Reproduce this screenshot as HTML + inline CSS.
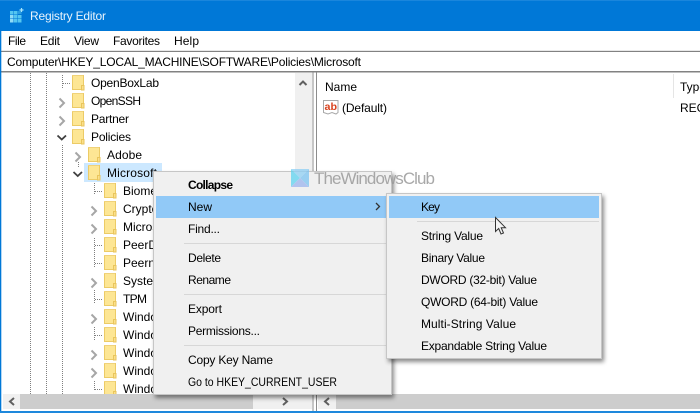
<!DOCTYPE html>
<html><head><meta charset="utf-8"><title>Registry Editor</title>
<style>
html,body{margin:0;padding:0;background:#fff;width:700px;height:413px;overflow:hidden}
svg{display:block}
text{font-family:"Liberation Sans",sans-serif;font-size:12px;fill:#000}
</style></head><body>
<svg width="700" height="413" viewBox="0 0 700 413" xmlns="http://www.w3.org/2000/svg">
<defs>
<g id="f"><rect x="0.5" y="0.5" width="11" height="14" fill="#fde694" stroke="#eccb66"/><rect x="0" y="0" width="11" height="1" fill="#f0d27a"/><rect x="9.5" y="10.5" width="2.5" height="4.5" fill="#fbe08a" stroke="#e9c55c" stroke-width="1"/></g>
<path id="c" d="M0 0l4.500 4.500l-4.500 4.500" fill="none" stroke="#a6a6a6" stroke-width="2"/>
<path id="e" d="M0 0l4.250 4l4.250-4" fill="none" stroke="#404040" stroke-width="1.800"/>
<filter id="s" x="-5%" y="-5%" width="112%" height="112%"><feDropShadow dx="2" dy="3" stdDeviation="2" flood-color="#000" flood-opacity=".45"/></filter>
</defs>

<!-- title bar -->
<rect x="0" y="0" width="700" height="31" fill="#0078d7"/>
<rect x="0" y="0" width="700" height="1" fill="#1a86dc"/>
<g fill="#55c6f0">
<rect x="10" y="11" width="3.500" height="3.500"/><rect x="14" y="11" width="3.500" height="3.500"/>
<rect x="10" y="15" width="3.500" height="3.500" fill="#8fdcf7"/><rect x="14" y="15" width="3.500" height="3.500"/><rect x="18" y="15" width="3.500" height="3.500"/>
<rect x="10" y="19" width="3.500" height="3.500" fill="#8fdcf7"/><rect x="14" y="19" width="3.500" height="3.500"/><rect x="18" y="19" width="3.500" height="3.500"/>
<rect x="18" y="11" width="3.500" height="3" fill="#2a9ce0"/>
<path d="M21.500 8v4M19.500 10h4" stroke="#a5e4fa" stroke-width="1.200"/>
</g>
<text x="30" y="20" textLength="76" lengthAdjust="spacing" style="fill:#e8f3fc">Registry Editor</text>

<!-- menu -->
<text x="8" y="45" textLength="18" lengthAdjust="spacing">File</text>
<text x="40" y="45" textLength="20" lengthAdjust="spacing">Edit</text>
<text x="74" y="45" textLength="25" lengthAdjust="spacing">View</text>
<text x="113" y="45" textLength="47" lengthAdjust="spacing">Favorites</text>
<text x="174" y="45" textLength="25" lengthAdjust="spacing">Help</text>

<!-- address -->
<rect x="0" y="50" width="700" height="1" fill="#e8e8e8"/>
<rect x="1" y="51" width="699" height="1" fill="#828282"/>
<text x="7" y="66" textLength="354" lengthAdjust="spacing">Computer\HKEY_LOCAL_MACHINE\SOFTWARE\Policies\Microsoft</text>
<rect x="1" y="71" width="699" height="1.500" fill="#828282"/>

<!-- left edge -->
<rect x="0" y="31" width="1.300" height="382" fill="#0078d7"/>

<!-- tree guide lines -->
<g stroke="#7f7f7f" stroke-width="1" stroke-dasharray="1 1" fill="none">
<path d="M30.500 73V394M46.500 73V394M62.500 75V88M62.500 145V394M78.500 162V167"/>
<path d="M94.500 183V194M94.500 238V268M94.500 290V304M94.500 327V340M94.500 381V391"/>
<path d="M63 83.500h7M95 191.500h7M95 245.500h7M95 263.500h7M95 299.500h7M95 335.500h7M95 389.500h7"/>
</g>

<!-- tree selection -->
<rect x="84" y="163" width="78" height="19" fill="#cce8ff"/>

<!-- folders -->
<use href="#f" x="72" y="75"/><use href="#f" x="72" y="93"/><use href="#f" x="72" y="111"/><use href="#f" x="72" y="129"/>
<use href="#f" x="88" y="147"/><use href="#f" x="88" y="165"/>
<use href="#f" x="104" y="183"/><use href="#f" x="104" y="201"/><use href="#f" x="104" y="219"/><use href="#f" x="104" y="237"/><use href="#f" x="104" y="255"/><use href="#f" x="104" y="273"/><use href="#f" x="104" y="291"/><use href="#f" x="104" y="309"/><use href="#f" x="104" y="327"/><use href="#f" x="104" y="345"/><use href="#f" x="104" y="363"/><use href="#f" x="104" y="381"/>

<!-- chevrons -->
<use href="#c" x="59.500" y="98.500"/><use href="#c" x="59.500" y="116.500"/>
<use href="#e" x="57.500" y="135.500"/>
<use href="#c" x="75.500" y="152.500"/>
<use href="#e" x="73.500" y="172"/>
<use href="#c" x="91.500" y="206.500"/><use href="#c" x="91.500" y="224.500"/><use href="#c" x="91.500" y="278.500"/><use href="#c" x="91.500" y="314.500"/><use href="#c" x="91.500" y="350.500"/><use href="#c" x="91.500" y="368.500"/>

<!-- tree text -->
<text x="91" y="87" textLength="68" lengthAdjust="spacing">OpenBoxLab</text>
<text x="91" y="105" textLength="50" lengthAdjust="spacing">OpenSSH</text>
<text x="91" y="123" textLength="38" lengthAdjust="spacing">Partner</text>
<text x="91" y="141" textLength="40" lengthAdjust="spacing">Policies</text>
<text x="107" y="159" textLength="35" lengthAdjust="spacing">Adobe</text>
<text x="107" y="177" textLength="50" lengthAdjust="spacing">Microsoft</text>
<text x="123" y="195">Biometrics</text>
<text x="123" y="213">Cryptography</text>
<text x="123" y="231">Microsoft</text>
<text x="123" y="249">PeerDist</text>
<text x="123" y="267">Peernet</text>
<text x="123" y="285">SystemCertificates</text>
<text x="123" y="303" textLength="24" lengthAdjust="spacing">TPM</text>
<text x="123" y="321">Windows</text>
<text x="123" y="339">Windows</text>
<text x="123" y="357">Windows</text>
<text x="123" y="375">Windows</text>
<text x="123" y="393">Windows</text>

<!-- tree vertical scrollbar -->
<rect x="295" y="73" width="17" height="321" fill="#f0f0f0"/>
<path d="M299.500 85l3.500-3.500l3.500 3.500" fill="none" stroke="#606060" stroke-width="2"/>

<!-- splitter -->
<rect x="312.500" y="72" width="1" height="339" fill="#8c8c8c"/>
<rect x="316" y="72" width="1" height="339" fill="#8c8c8c"/>

<!-- list pane -->
<text x="325" y="91" textLength="32" lengthAdjust="spacing">Name</text>
<rect x="673" y="74" width="1" height="24" fill="#e5e5e5"/>
<text x="680" y="91">Type</text>
<path d="M323.500 100.500h14.500v12l-2 1.500l-4-1.500l-4 1.500l-4.500-1.500z" fill="#fff" stroke="#a8a8a8"/>
<text x="324.500" y="110" style="font-size:10px;font-weight:bold;fill:#d8401c" textLength="12.500" lengthAdjust="spacingAndGlyphs">ab</text>
<text x="342" y="112" textLength="45" lengthAdjust="spacing">(Default)</text>
<text x="680" y="112">REG_SZ</text>

<!-- bottom scrollbars -->
<rect x="3" y="394" width="309" height="15" fill="#f0f0f0"/>
<rect x="20" y="394" width="233" height="15" fill="#cdcdcd"/>
<path d="M14 398l-4 3.500l4 3.500" fill="none" stroke="#606060" stroke-width="2"/>
<path d="M283 398l4 3.500l-4 3.500" fill="none" stroke="#606060" stroke-width="2"/>
<rect x="318" y="394" width="18" height="15" fill="#f0f0f0"/>
<rect x="336" y="394" width="364" height="15" fill="#cdcdcd"/>
<path d="M329 398l-4 3.500l4 3.500" fill="none" stroke="#606060" stroke-width="2"/>
<rect x="0" y="411" width="700" height="2" fill="#1e88dc"/>

<!-- context menu -->
<rect x="153.500" y="171.500" width="238" height="223" fill="#f0f0f0" stroke="#c6c6c6" filter="url(#s)"/>
<rect x="156" y="196" width="233" height="22" fill="#91c9f7"/>
<rect x="184" y="243" width="205" height="1" fill="#d7d7d7"/>
<rect x="184" y="294" width="205" height="1" fill="#d7d7d7"/>
<rect x="184" y="345" width="205" height="1" fill="#d7d7d7"/>
<text x="188" y="189" textLength="45" lengthAdjust="spacing" style="font-weight:bold">Collapse</text>
<text x="188" y="211" textLength="24" lengthAdjust="spacing">New</text>
<path d="M376 203l3.500 3.500l-3.500 3.500" fill="none" stroke="#333" stroke-width="1.300"/>
<text x="188" y="233" textLength="32" lengthAdjust="spacing">Find...</text>
<text x="188" y="262" textLength="33" lengthAdjust="spacing">Delete</text>
<text x="188" y="284" textLength="43" lengthAdjust="spacing">Rename</text>
<text x="188" y="313" textLength="34" lengthAdjust="spacing">Export</text>
<text x="188" y="335" textLength="72" lengthAdjust="spacing">Permissions...</text>
<text x="188" y="364" textLength="85" lengthAdjust="spacing">Copy Key Name</text>
<text x="188" y="386" textLength="149" lengthAdjust="spacingAndGlyphs">Go to HKEY_CURRENT_USER</text>

<!-- submenu -->
<rect x="386.500" y="193.500" width="215" height="165" fill="#f0f0f0" stroke="#c6c6c6" filter="url(#s)"/>
<rect x="389" y="196" width="210" height="22" fill="#91c9f7"/>
<rect x="417" y="221" width="182" height="1" fill="#d7d7d7"/>
<text x="421" y="211" textLength="19" lengthAdjust="spacing">Key</text>
<text x="421" y="240" textLength="62" lengthAdjust="spacing">String Value</text>
<text x="421" y="262" textLength="64" lengthAdjust="spacing">Binary Value</text>
<text x="421" y="284" textLength="116" lengthAdjust="spacing">DWORD (32-bit) Value</text>
<text x="421" y="306" textLength="117" lengthAdjust="spacing">QWORD (64-bit) Value</text>
<text x="421" y="328" textLength="95" lengthAdjust="spacing">Multi-String Value</text>
<text x="421" y="350" textLength="126" lengthAdjust="spacing">Expandable String Value</text>

<!-- cursor -->
<path d="M495.500 217.500v14l3.200-3l2.300 5.500l2.500-1l-2.300-5.300h4.300z" fill="#f4f4f4" stroke="#333" stroke-width="1"/>

<!-- watermark -->
<g opacity=".75">
<path d="M291 169h18l-9 9z" fill="#8fd0f5"/>
<path d="M291 169l9 9l-9 9z" fill="#5fd3f0"/>
<path d="M309 169l-9 9l9 9z" fill="#7cc4f2"/>
<path d="M291 187l9-9l9 9z" fill="#9db4ee"/>
</g>
<text x="314" y="184" textLength="121" lengthAdjust="spacing" style="font-size:17px;fill:#9a9a9a" opacity=".85">TheWindowsClub</text>
</svg>
</body></html>
